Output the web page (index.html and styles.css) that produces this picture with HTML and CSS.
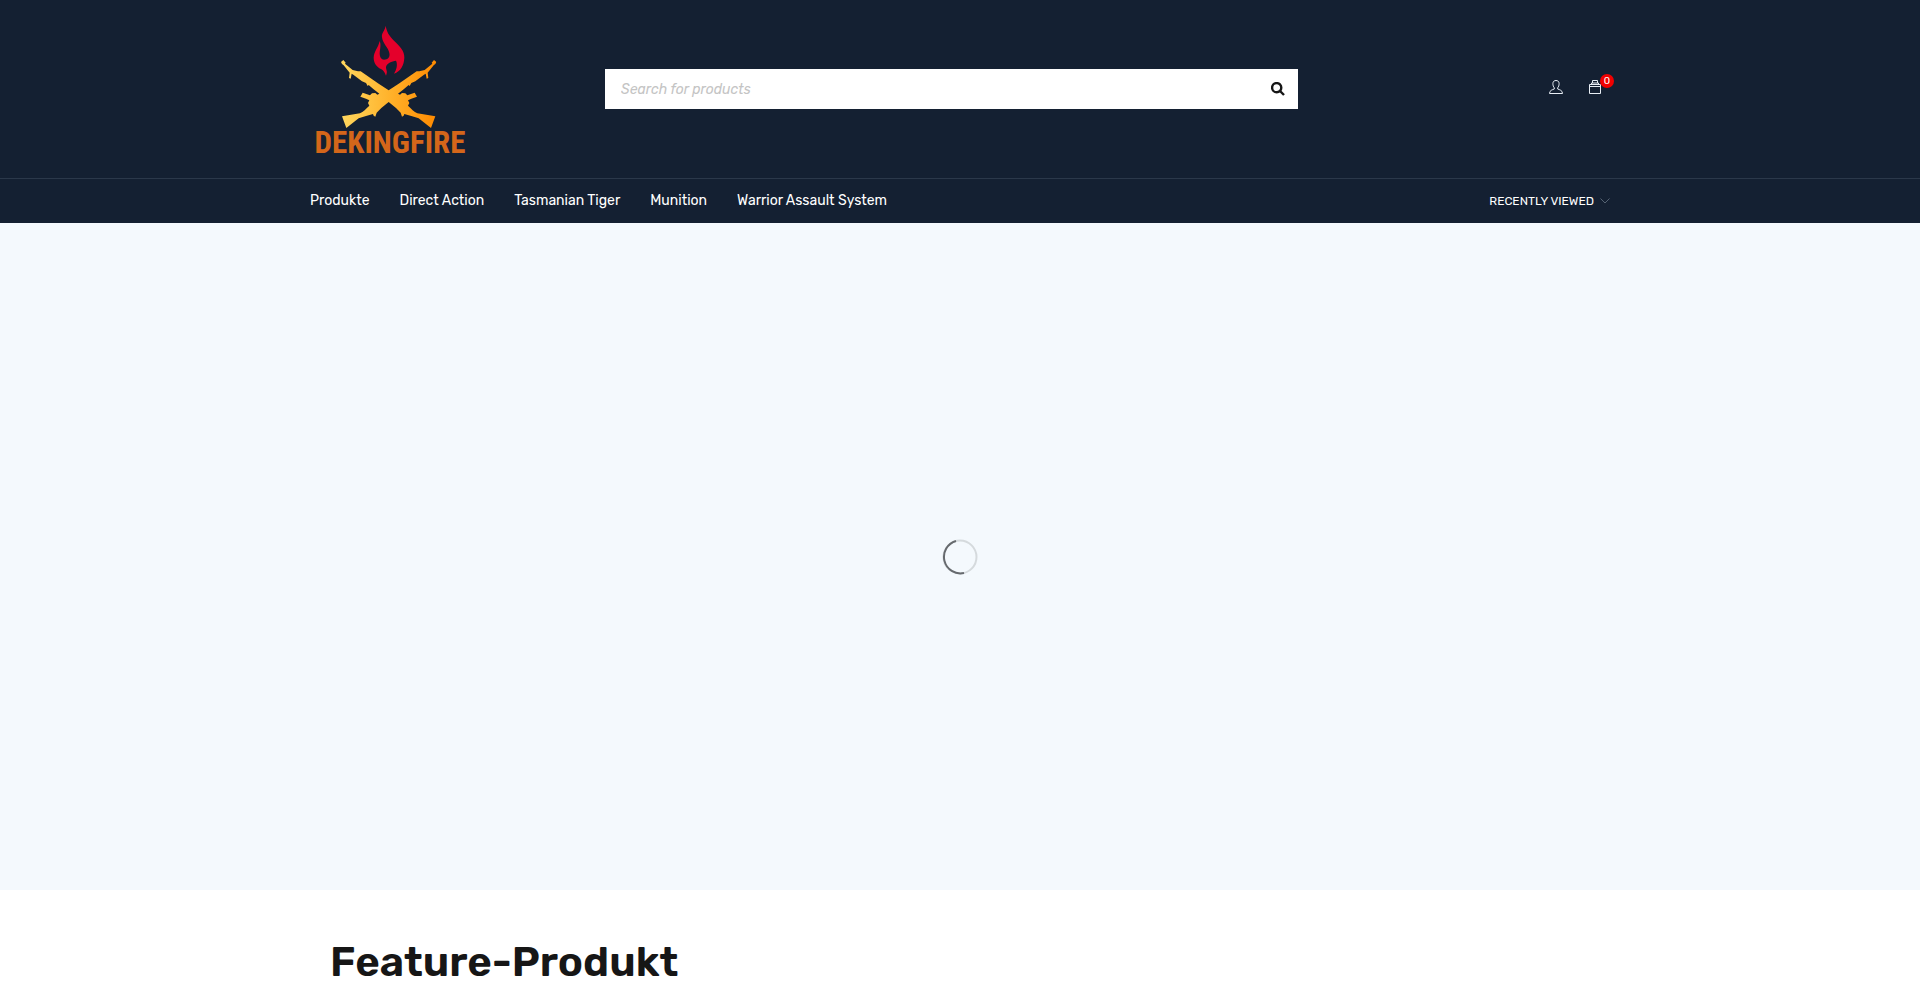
FILE: index.html
```html
<!DOCTYPE html>
<html lang="de">
<head>
<meta charset="utf-8">
<meta name="viewport" content="width=device-width, initial-scale=1">
<title>Dekingfire</title>
<link rel="stylesheet" href="styles.css">
</head>
<body>
<header class="header">
  <div class="container header-main">
    <a class="logo" href="#" aria-label="Dekingfire">
      <svg class="logo-art" viewBox="30 0 480 480" aria-hidden="true">
        <defs>
          <linearGradient id="gold" gradientUnits="userSpaceOnUse" x1="125" y1="250" x2="408" y2="250">
            <stop offset="0" stop-color="#ffd75e"/>
            <stop offset=".5" stop-color="#ffb32c"/>
            <stop offset="1" stop-color="#ff8a00"/>
          </linearGradient>
          <clipPath id="rifles">
            <path id="half" d="M123 156L130 150L137 158L135 161L158 180L174 184L182 184L236 221L266 241V276L244 294L230 308L226 320L221 317L219 312L198 318L176 325L139 354L126 319L180 310C190 306 198 296 208 287L204 279L208 271L198 266L181 260L188 248L210 256L216 250L226 249L232 254L238 251L220 237L206 225L203 228L198 219L186 214L160 194L155 191L152 206L147 204L149 188L131 166L126 162Z"/>
            <use href="#half" transform="matrix(-1 0 0 1 532 0)"/>
          </clipPath>
        </defs>
        <rect x="110" y="140" width="310" height="230" fill="url(#gold)" clip-path="url(#rifles)"/>
        <path fill="#e4002b" d="M257 47C260 66 268 78 282 92C299 108 314 122 313 143C312 166 302 184 282 191C289 180 294 164 288 152C276 154 258 160 258 172C258 181 264 184 258 197C254 187 250 180 243 177C229 170 221 158 221 143C222 123 235 113 239 93C244 104 240 116 239 131C239 141 244 148 252 149C263 149 271 142 268 129C265 113 248 101 246 82C244 68 255 62 257 47Z"/>
        <text class="logo-name" x="270" y="429" text-anchor="middle">DEKINGFIRE</text>
      </svg>
    </a>
    <form class="search" role="search">
      <input class="search-input" type="search" placeholder="Search for products" aria-label="Search for products">
      <button class="search-button" type="button" aria-label="Search">
        <svg class="search-icon" viewBox="0 0 14 14" aria-hidden="true"><circle cx="5.7" cy="5.7" r="4.6"/><path d="M9 9l4 4"/></svg>
      </button>
    </form>
    <div class="actions">
      <a class="action" href="#" aria-label="Account">
        <svg class="icon" viewBox="0 0 14 14" aria-hidden="true"><path d="M5.300 9V7.800C4.300 6.800 3.900 5.200 3.900 3.600 3.900 1.500 5.200.5 7 .5s3.100 1 3.100 3.100c0 1.600-.4 3.200-1.400 4.200V9c1.800.8 4.800 1.200 4.800 4.500H.5C.5 10.200 3.500 9.800 5.300 9z"/></svg>
      </a>
      <a class="action" href="#" aria-label="Cart, 0 items">
        <svg class="icon" viewBox="0 0 14 14" aria-hidden="true"><path d="M1.500 4.500h11v9h-11zM1.500 6.500h11M3.500 4.500V3h7v1.500M4.500 3V.5h5V3"/></svg>
        <span class="badge">0</span>
      </a>
    </div>
  </div>
  <div class="navbar">
    <div class="container nav-row">
      <nav class="nav">
        <a href="#">Produkte</a>
        <a href="#">Direct Action</a>
        <a href="#">Tasmanian Tiger</a>
        <a href="#">Munition</a>
        <a href="#">Warrior Assault System</a>
      </nav>
      <button class="recent" type="button">RECENTLY VIEWED
        <svg class="chevron" viewBox="0 0 10 6" aria-hidden="true"><path d="M.5.5L5 5l4.500-4.500"/></svg>
      </button>
    </div>
  </div>
</header>
<main>
  <section class="hero" aria-label="Slider">
    <svg class="spinner" viewBox="0 0 36 36" role="img" aria-label="Loading"><circle class="track" cx="18" cy="18" r="16.500"/><path class="arc" d="M14 2A16.500 16.500 0 0 0 22 34"/></svg>
  </section>
  <section class="container featured">
    <h2 class="title">Feature-Produkt</h2>
  </section>
</main>
</body>
</html>
```

FILE: styles.css
```css
* { box-sizing: border-box; }
body {
  margin: 0;
  background: #fff;
  color: #161616;
  font-family: Rubik, Roboto, sans-serif;
}
a { color: inherit; text-decoration: none; }
button { border: 0; padding: 0; background: none; color: inherit; font: inherit; cursor: pointer; }
.container { width: 100%; max-width: 1300px; margin: 0 auto; }
.header { background: #142032; color: #fff; }
.header-main {
  display: grid;
  grid-template-columns: 160px minmax(0, 693px) 1fr;
  column-gap: 135px;
  align-items: center;
  padding: 10px 0 8px;
}
.logo, .logo-art { display: block; }
.logo-art { width: 160px; height: 160px; }
.logo-name {
  fill: #d4661a;
  font-family: "Roboto Condensed", "Liberation Sans Narrow", sans-serif;
  font-size: 93px;
  font-weight: 700;
}
.search { display: flex; height: 40px; margin-bottom: 2px; background: #fff; }
.search-input {
  flex: 1;
  min-width: 0;
  border: 0;
  padding: 0 16px;
  background: none;
  color: #161616;
  font: 400 14px Rubik, Roboto, sans-serif;
  outline: 0;
}
.search-input::placeholder { color: #c4c4c4; font-style: italic; opacity: 1; }
.search-button { display: grid; place-items: center; width: 40px; color: #161616; }
.search-icon { width: 14px; height: 14px; fill: none; stroke: currentColor; stroke-width: 2.4; }
.actions { display: flex; justify-content: flex-end; gap: 25px; margin-bottom: 6px; padding-right: 8px; }
.action { position: relative; display: block; }
.icon { display: block; width: 14px; height: 14px; fill: none; stroke: #e8eef5; }
.badge {
  position: absolute;
  top: -6px;
  left: 12px;
  width: 14px;
  height: 14px;
  border-radius: 50%;
  background: #f00000;
  color: #fff;
  font-size: 10px;
  line-height: 14px;
  text-align: center;
}
.navbar { border-top: 1px solid #2b384a; }
.nav-row { display: flex; justify-content: space-between; align-items: center; height: 44px; }
.nav { display: flex; gap: 30px; font-size: 14px; line-height: 20px; }
.recent { display: flex; align-items: center; gap: 6px; font-size: 12px; }
.chevron { width: 10px; height: 6px; fill: none; stroke: #566373; }
.hero { display: grid; place-items: center; height: 667px; background: #f4f9fd; }
.spinner { width: 36px; height: 36px; fill: none; stroke-width: 2; }
.track { stroke: #d5dadd; }
.arc { stroke: #666a6e; }
.featured { padding: 47px 20px 0; }
.title { margin: 0; font: 600 42px/50px Rubik, Inter, sans-serif; }
```
